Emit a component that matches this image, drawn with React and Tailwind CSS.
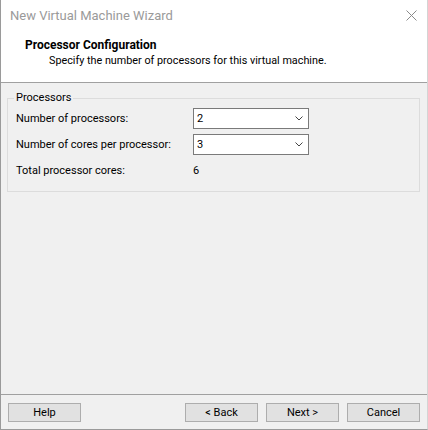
import React from "react";

const ChevronDown = () => (
  <svg width="8" height="5" viewBox="0 0 8 5" className="text-[#444]">
    <path d="M0.5 0.5 L4 4 L7.5 0.5" fill="none" stroke="currentColor" strokeWidth="1" />
  </svg>
);

const Combo = ({ value }) => (
  <div className="w-[116px] h-[21px] flex items-center justify-between bg-white border border-[#7a7a7a] pl-[3px] pr-[5px]">
    <span>{value}</span>
    <ChevronDown />
  </div>
);

const Btn = ({ children, className = "" }) => (
  <button className={"w-[73px] h-[19px] flex items-center justify-center bg-[#e1e1e1] border border-[#adadad] text-black " + className}>
    {children}
  </button>
);

export default function App() {
  return (
    <div
      className="w-[428px] h-[430px] flex flex-col bg-[#f0f0f0] border-l border-r border-b border-l-[#9a9a9a] border-r-[#d4d4d4] border-b-[#9a9a9a] text-[11px] leading-[14px] text-black"
      style={{ fontFamily: "Roboto, 'Liberation Sans', sans-serif" }}
    >
      {/* title bar */}
      <div className="h-[31px] shrink-0 flex items-center justify-between bg-white pl-[9px] pr-[10px]">
        <span className="text-[13px] text-[#9a9a9a]">New Virtual Machine Wizard</span>
        <svg width="11" height="11" viewBox="0 0 11 11">
          <path d="M0.5 0.5 L10.5 10.5 M10.5 0.5 L0.5 10.5" stroke="#8a8a8a" strokeWidth="1" />
        </svg>
      </div>

      {/* page header */}
      <div className="h-[52px] shrink-0 flex flex-col bg-white border-b border-[#a0a0a0] pl-[24px] pt-[6px]">
        <span className="text-[12px] leading-[16px] font-bold">Processor Configuration</span>
        <span className="ml-[24px] text-[10.8px] leading-[16px]">Specify the number of processors for this virtual machine.</span>
      </div>

      {/* body */}
      <div className="flex-1 flex flex-col">
        <fieldset className="mt-[7px] ml-[6px] w-[413px] border border-[#dcdcdc] pl-[8px] pb-[10px]">
          <legend className="-ml-[2px] px-[2px] leading-[16px]">Processors</legend>
          <div className="mt-[2px] flex flex-col gap-[5px]">
            <div className="flex items-center h-[21px]">
              <span className="w-[177px]">Number of processors:</span>
              <Combo value="2" />
            </div>
            <div className="flex items-center h-[21px]">
              <span className="w-[177px]">Number of cores per processor:</span>
              <Combo value="3" />
            </div>
            <div className="flex items-center h-[21px]">
              <span className="w-[177px]">Total processor cores:</span>
              <span>6</span>
            </div>
          </div>
        </fieldset>
      </div>

      {/* buttons */}
      <div className="h-[35px] shrink-0 flex items-start border-t border-[#a0a0a0] pt-[8px] px-[7px]">
        <Btn>Help</Btn>
        <div className="flex-1" />
        <div className="flex gap-[8px]">
          <Btn>&lt; Back</Btn>
          <Btn>Next &gt;</Btn>
          <Btn>Cancel</Btn>
        </div>
      </div>
    </div>
  );
}
